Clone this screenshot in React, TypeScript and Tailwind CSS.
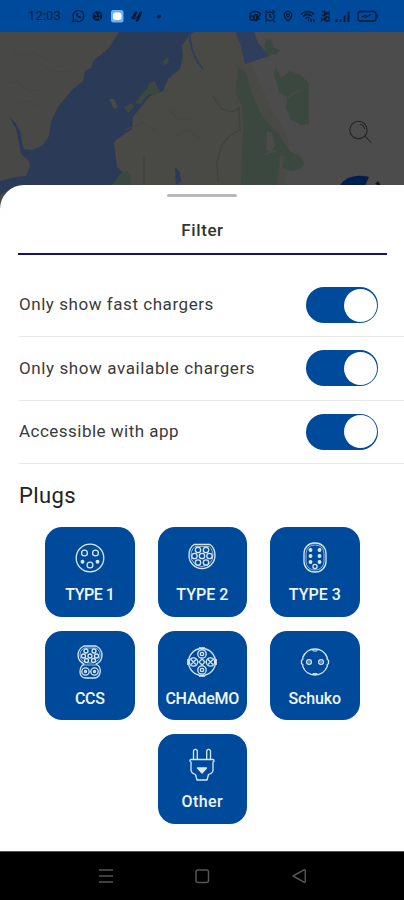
import { useState } from "react"
import type { ReactNode } from "react"

function StatusBar() {
  return (
    <div className="flex h-8 shrink-0 items-center justify-between bg-[#004a9b] pl-[28px] pr-[26px] text-[#061b38]">
      <div className="flex items-center">
        <span className="w-[35px] whitespace-nowrap text-[13px] tracking-[0.1px]">12:03</span>
        <svg className="ml-[8px]" width="96" height="16" viewBox="0 0 96 16" fill="none">
          <path d="M1.5 13.8l1.1-3a5.5 5.5 0 1 1 2.2 2.1z" stroke="currentColor" strokeWidth="1.2" />
          <path d="M5 5.5c0 2.5 2.5 4.7 4.6 4.7l.8-1.3-1.6-.9-.9.6-1.4-1.5.5-.9-.7-1.5z" fill="currentColor" />
          <circle cx="26.500" cy="8" r="5" fill="currentColor" />
          <path d="M23 5l3 2.500M30 5.500l-2 2M24 10.500l3-1M28 9l1 3" stroke="#004a9b" strokeWidth="1.2" />
          <rect x="40" y="2" width="12.500" height="12.500" rx="2.500" fill="#6db1f4" />
          <rect x="42" y="4.500" width="8.500" height="7.500" rx="2.500" fill="#fff" />
          <path d="M61 11l3-7h2l-3 7zM65 13l4-9h2l-4 9zM60 9.500l5-2M64 11l7-7" fill="currentColor" stroke="currentColor" />
          <circle cx="88" cy="8.300" r="1.900" fill="currentColor" />
        </svg>
      </div>
      <svg width="130" height="16" viewBox="0 0 130 16" fill="none" stroke="currentColor" strokeWidth="1.3">
        <path d="M2 6.500C3 2.500 11 2.500 12.500 6.500M2 8h4v4H2.500zM7 6l5 6M12 7l-5 6M9 6v7" strokeWidth="1.700" />
        <circle cx="22" cy="8.500" r="4.300" />
        <path d="M22 6v2.500l2 1M17 4.500L19.500 2.500M27 4.500L24.500 2.500M18.500 12.500L17.500 14M25.500 12.500l1 1.500" />
        <path d="M40 13c-2.500-2-3.700-4.200-3.700-6a3.700 3.700 0 0 1 7.400 0c0 1.800-1.200 4-3.700 6z" />
        <circle cx="40" cy="7.200" r="1.500" />
        <path d="M53 6.500c4-4 9.500-4 13 0M55 8.500c3-2.700 6.200-2.700 9 0M57.500 10.500c1.500-1.200 3-1.200 4 0M60 12.500h1M63 11v3M66 11v3" strokeWidth="1.500" />
        <path d="M73.500 3.500h3v4h-3M78 3.500v3l3-2.500v3.500M73.500 9v4l3-3v3M78 9h3v4h-3z" />
        <path d="M88.500 11.500v2.500M92.500 11v3M96.500 7.500V14M100.500 3.500V14" strokeWidth="2" />
        <rect x="110" y="3.500" width="18" height="9.500" rx="2.500" />
        <path d="M129.300 6.500v3.500M114 9l4-2M117 9.500l6-3" />
      </svg>
    </div>
  )
}

function MapBackground() {
  return (
    <div className="relative h-[153px] shrink-0 bg-[#4c4c4c]">
      <svg className="absolute top-0 left-0" width="404" height="185" viewBox="0 32 404 185">
        <path d="M0 32h235l16 32 17 38 18 32 5 20-13 63H0z" fill="#494a46" />
        <path d="M0 32h120L60 110l-8 90H0z" fill="#484846" />
        <path
          d="M119 32l-10 16-15 12-3 8-6 3-2 10-11 9-14 17-7 15-2 14-6 9-10 5-9-1-2-6-1-10-5-9-7-8 7 13 3 14 2 11 8 7 1 5-4 10-10 1-16 4v14l14-8 6 30h120l-12-40-11-10-3-24 2-3 16-11 1-12 17-21 13-5 5-12 12-10 3-13-1-11 9-11 10-7 2-9z"
          fill="#2b3a56"
        />
        <path d="M109 99l5 0 4 8-4 2z" fill="#474b45" />
        <path d="M235 32h19l4 11 12 13-25 8-4-18z" fill="#303e5e" />
        <path d="M189 32l3 17 5 12 6 8M192 50l-3-15" stroke="#303e5a" strokeWidth="1.700" fill="none" />
        <path d="M175 167l5 5 1 9-5 4z" fill="#2b3a56" />
        <g fill="#3b483f">
          <path d="M238 67l8 5 6 22 10 22 16 18 13 18 9 4 4 7-3 6-10 2-9-4 3-10-5-1-3 29h-36l1-32 1-26-1-22-6-10z" />
          <path d="M276 67l5 11 9-7 11 4 8 9v40l-8 1-10-5-5-12 1-11-8-5-5-18z" />
          <path d="M139 98l4-6 4-3 2-6 6-2 2 5 3 5-5 5-6-2-5 5-3 5-6-1z" />
          <path d="M266 39l6 2 1 6 7 3-3 4-9 1-4-8z" />
          <path d="M163 61l5-4 1 5-5 4zM124 107l8-4 2 4-6 6zM120 174l7-3 4 4-2 10h-17z" />
        </g>
        <path d="M213 96l9 13 10 3 7-4 1 22-10 5-8 10-5 17 1 20M144 155v30" fill="none" stroke="#3f453d" strokeWidth="1.500" />
        <path d="M267 130l5 3 3 12-4 8-5-3z" fill="#4a4c49" />
        <path d="M288 97l12-7M265 154l11-3" stroke="#494b48" strokeWidth="2" />
        <path d="M12 50l8 6 14-3 15 7M41 65l12 7 20-1M4 85l13-4 11 10 14-2M13 104l16-3 10 8M170 110l9 10 14-2M125 130l18-7 13 8M200 139l-12-9-14 7" fill="none" stroke="#464743" strokeWidth="1.200" />
        <g fill="none" stroke="#242424" strokeWidth="1.100">
          <circle cx="358.500" cy="130" r="8.700" />
          <path d="M360 124c3 1 4.500 3 4.700 5M365 136l6.500 7" />
        </g>
        <path d="M339 187c6-11 18-13 30-10l-5 11z" fill="#001f50" />
        <path d="M375 184l3-3 3 5z" fill="#151515" />
      </svg>
    </div>
  )
}

function FilterRow({ label, text }: { label: string; text: string }) {
  const [enabled, setEnabled] = useState(true)

  return (
    <div className="ml-[19px] flex h-[63.3px] items-center justify-between border-b border-[#e8e8e8] pr-[26px]">
      <span className={`text-[17px] whitespace-nowrap text-[#3a3a3a] ${text}`}>{label}</span>
      <button
        role="switch"
        aria-checked={enabled}
        aria-label={label}
        onClick={() => setEnabled(!enabled)}
        className={`flex h-9 w-[72px] items-center rounded-full px-[1.5px] ${enabled ? "justify-end bg-[#004a9b]" : "justify-start bg-gray-300"}`}
      >
        <span className="size-[33px] rounded-full bg-white" />
      </button>
    </div>
  )
}

const dots = (points: number[][], r: number) =>
  points.map(([x, y]) => <circle key={`${x}-${y}`} cx={x} cy={y} r={r} />)

const icons: Record<string, ReactNode> = {
  type1: (
    <>
      <circle cx="17" cy="17" r="13.800" />
      {dots([[11.5, 12], [22.5, 12], [17, 24]], 2.9)}
      <g fill="currentColor">{dots([[9.5, 20.7], [24.5, 20.7]], 1.3)}</g>
    </>
  ),
  type2: (
    <>
      <path d="M9 3.500h16c3 2 5 6 5 11a13 13 0 0 1-26 0c0-5 2-9 5-11z" />
      <path d="M10 5.500h14c2.500 2 4 5 4 9a11 11 0 0 1-22 0c0-4 1.500-7 4-9z" strokeWidth=".7" />
      {dots([[13, 9], [21, 9], [9.5, 15], [17, 15], [24.5, 15], [13, 21.5], [21, 21.5]], 2.7)}
    </>
  ),
  type3: (
    <>
      <rect x="6" y="2" width="22" height="29" rx="10.500" />
      <rect x="8" y="4" width="18" height="25" rx="8.500" strokeWidth=".7" />
      <g fill="currentColor">{dots([[12.5, 9], [21.5, 9], [12.5, 15], [21.5, 15], [12.5, 21], [21.5, 21]], 1.3)}</g>
      {dots([[17, 25.5]], 2.1)}
    </>
  ),
  ccs: (
    <>
      <path d="M11 1h12c4 2 6 5 6 9 0 5-3 8-6 9 4 2 5 5 4 9-1 4-4 5-6 5h-8c-3 0-6-2-6-6 0-3 1-6 4-8-4-2-6-5-6-9 0-4 2-7 6-9z" />
      <path d="M11 3h12c3 2 4 4 4 7 0 5-4 8-10 8S7 15 7 10c0-3 1-5 4-7zM10 20h14" strokeWidth=".7" />
      {dots([[13, 6], [21, 6], [10.5, 11], [17, 11], [23.5, 11], [13.5, 15.500], [20.5, 15.500]], 2)}
      {dots([[12.5, 26.5], [21.5, 26.5]], 3.7)}
      {dots([[12.5, 26.5], [21.5, 26.5]], 1)}
    </>
  ),
  chademo: (
    <>
      <circle cx="17" cy="17" r="13.500" />
      {dots([[17, 9], [17, 25], [8.5, 17], [25.500, 17]], 4.2)}
      {dots([[17, 9], [17, 25]], 1.7)}
      <path d="M6 14.500l5 5M11 14.500l-5 5M23 14.500l5 5M28 14.500l-5 5M14 17l3-3 3 3-3 3zM14 2.800h6M14 31.200h6M2.800 14v6M31.200 14v6" />
    </>
  ),
  schuko: (
    <>
      <path d="M4.800 12.500a13 13 0 0 1 24.400 0v2l1.300.8v3.400l-1.300.8v2a13 13 0 0 1-24.400 0v-2l-1.300-.8v-3.400l1.300-.8z" />
      <path d="M15 4v2h4V4M15 30v-1.500h4V30" strokeWidth="1" />
      {dots([[11, 17], [23, 17]], 2.4)}
      <g fill="currentColor" stroke="none">{dots([[11, 17], [23, 17]], 0.8)}</g>
    </>
  ),
  other: (
    <>
      <path d="M8.500 11.500V3.300a1.900 1.900 0 0 1 3.800 0v8.200M21.700 11.500V3.300a1.900 1.900 0 0 1 3.800 0v8.200" />
      <path d="M6 11.500h22c1.200 0 1.500 2 0 2.500v8c0 2-1.500 3.500-4.500 4.500L22 32H12l-1.500-5.500C7.500 25.500 6 24 6 22v-8c-1.500-.5-1.200-2.500 0-2.500z" />
      <path d="M12.500 20h9L17 25z" fill="currentColor" />
    </>
  ),
}

const plugs = [
  { id: "type1", label: "TYPE 1", text: "tracking-[-0.5px]" },
  { id: "type2", label: "TYPE 2", text: "tracking-[0px]" },
  { id: "type3", label: "TYPE 3", text: "tracking-[0px]" },
  { id: "ccs", label: "CCS", text: "tracking-[-0.4px]" },
  { id: "chademo", label: "CHAdeMO", text: "tracking-[-0.2px]" },
  { id: "schuko", label: "Schuko", text: "tracking-[-0.1px]" },
  { id: "other", label: "Other", text: "tracking-[0.4px]" },
]

function PlugCard({ id, label, text }: { id: string; label: string; text: string }) {
  return (
    <button className="flex h-[89.500px] w-[89.500px] flex-col items-center rounded-[17px] bg-[#004a9b] pt-[14px] text-[#f0f6fc]">
      <svg
        width="34"
        height="34"
        viewBox="0 0 34 34"
        fill="none"
        stroke="#d9e7f5"
        strokeWidth="1.300"
        strokeLinejoin="round"
        className="shrink-0 overflow-visible text-[#d9e7f5]"
      >
        {icons[id]}
      </svg>
      <span className={`mt-[10px] text-[16px] leading-5 font-medium whitespace-nowrap ${text}`}>{label}</span>
    </button>
  )
}

function NavigationBar() {
  return (
    <div className="flex h-[49px] shrink-0 items-center justify-center border-t border-[#555] bg-black">
      <svg width="210" height="18" viewBox="0 0 210 18" fill="none" stroke="#555" strokeWidth="1.500">
        <path d="M2 3h14M2 9h14M2 15h14" />
        <rect x="99" y="3" width="12.500" height="12.500" rx="2" />
        <path d="M196 9l11-6.200c.8-.4 1.300 0 1.300.8v10.800c0 .8-.5 1.200-1.300.8z" strokeLinejoin="round" />
      </svg>
    </div>
  )
}

export default function App() {
  return (
    <div className="flex h-[900px] w-[404px] flex-col overflow-hidden bg-white font-['Roboto',sans-serif]">
      <StatusBar />
      <MapBackground />
      <main className="relative flex h-[666px] shrink-0 flex-col rounded-t-[24px] bg-white">
        <div className="mx-auto mt-[9px] h-[3px] w-[70px] rounded-full bg-[#b9b9b9]" />
        <h1 className="mt-[21px] pl-[1px] text-center text-[17px] leading-6 font-medium tracking-[0.6px] text-[#333]">Filter</h1>
        <div className="mt-[11px] mr-[17px] ml-[18px] h-[2px] bg-[#14146c]" />
        <div className="mt-[19px]">
          <FilterRow label="Only show fast chargers" text="tracking-[0.55px]" />
          <FilterRow label="Only show available chargers" text="tracking-[0.6px]" />
          <FilterRow label="Accessible with app" text="tracking-[0.48px]" />
        </div>
        <h2 className="mt-[17px] ml-[19px] text-[22px] leading-[30px] tracking-[0.4px] text-[#222]">Plugs</h2>
        <div className="mt-[16.500px] flex flex-wrap justify-center gap-x-[23px] gap-y-[14px] pr-[29.500px] pl-[30px]">
          {plugs.map((plug) => (
            <PlugCard key={plug.id} {...plug} />
          ))}
        </div>
      </main>
      <NavigationBar />
    </div>
  )
}
